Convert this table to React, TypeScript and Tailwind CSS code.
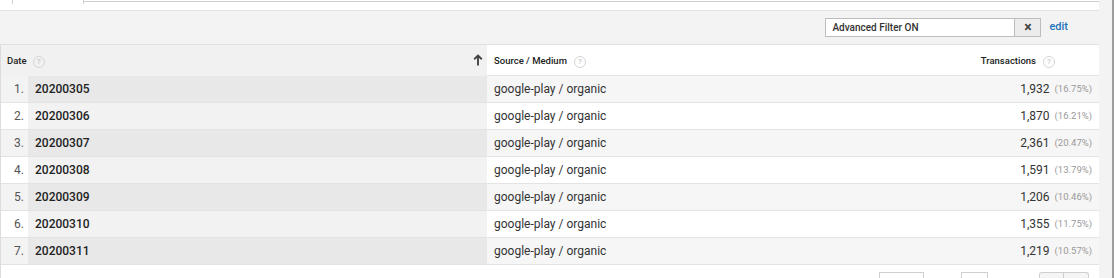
import React from "react";

const rows = [
  ["20200305", "1,932", "(16.75%)"],
  ["20200306", "1,870", "(16.21%)"],
  ["20200307", "2,361", "(20.47%)"],
  ["20200308", "1,591", "(13.79%)"],
  ["20200309", "1,206", "(10.46%)"],
  ["20200310", "1,355", "(11.75%)"],
  ["20200311", "1,219", "(10.57%)"],
];

function Help() {
  return (
    <span className="inline-flex h-[12px] w-[12px] items-center justify-center rounded-full border border-[#d6d6d6] text-[8px] leading-none text-[#c8c8c8]">
      ?
    </span>
  );
}

export default function App() {
  return (
    <div className="flex h-[278px] w-[1115px] overflow-hidden bg-white" style={{ fontFamily: "Roboto, 'Liberation Sans', sans-serif" }}>
      <div className="flex w-[1099px] shrink-0 flex-col">
        {/* tab strip */}
        <div className="flex h-[11px] shrink-0 border-b border-[#e3e3e3]">
          <div className="w-[12px]" />
          <div className="h-[4px] w-[72px] border-x border-[#cfcfcf] bg-white" />
          <div className="h-[2px] flex-1 border-b border-[#cfcfcf]" />
        </div>
        {/* toolbar */}
        <div className="flex h-[34px] shrink-0 items-center justify-end border-b border-[#e0e0e0] bg-[#f3f3f3] pr-[31px]">
          <div className="flex h-[19px] items-stretch">
            <div className="flex w-[190px] items-center border border-[#bdbdbd] bg-white pl-[6px] text-[10px] font-medium text-[#333]">
              Advanced Filter ON
            </div>
            <div className="flex w-[26px] items-center justify-center border border-l-0 border-[#bdbdbd] bg-[#ececec] text-[14px] font-bold text-[#444]">
              ×
            </div>
          </div>
          <span className="ml-[8px] text-[11px] font-medium text-[#1f73b7]">edit</span>
        </div>
        {/* table */}
        <div className="shrink-0 border-l border-[#dcdcdc]">
          <div className="flex h-[31px] items-center border-b border-[#e3e3e3] pt-[3px] text-[9.5px] font-medium text-[#222]">
            <div className="-mt-[3px] flex h-[31px] w-[486px] items-center bg-[#f1f1f1] pl-[6px] pr-[4px] pt-[3px]">
              <span>Date</span>
              <span className="ml-[6px]"><Help /></span>
              <svg className="-mt-[4px] ml-auto" width="10" height="12" viewBox="0 0 10 12">
                <path d="M5 1.5 V11.5 M1.2 5.2 L5 1.5 L8.8 5.2" fill="none" stroke="#444" strokeWidth="1.9" />
              </svg>
            </div>
            <div className="flex h-full flex-1 items-center pl-[7px]">
              <span>Source / Medium</span>
              <span className="ml-[7px]"><Help /></span>
            </div>
            <div className="flex h-full items-center pr-[44px]">
              <span>Transactions</span>
              <span className="ml-[7px]"><Help /></span>
            </div>
          </div>
          {rows.map((r, i) => {
            const odd = i % 2 === 0;
            return (
              <div key={r[0]} className={`flex h-[27px] items-center border-b border-[#e3e3e3] text-[12px] ${odd ? "bg-[#f6f6f6]" : "bg-white"}`}>
                <div className={`flex h-full w-[27px] items-center justify-end pr-[4px] text-[#555] ${odd ? "bg-[#f3f3f3]" : "bg-white"}`}>
                  {i + 1}.
                </div>
                <div className={`flex h-full w-[459px] items-center pl-[7px] font-medium text-[#222] ${odd ? "bg-[#e8e8e8]" : "bg-[#f2f2f2]"}`}>
                  {r[0]}
                </div>
                <div className="flex h-full flex-1 items-center pl-[7px] text-[#333]">google-play / organic</div>
                <div className="flex h-full items-center pr-[7px] text-[#333]">
                  {r[1]}
                  <span className="ml-[5px] text-[9.5px] text-[#999]">{r[2]}</span>
                </div>
              </div>
            );
          })}
          <div className="flex h-[20px] items-start pt-[7px]">
            <div className="ml-[878px] h-[12px] w-[45px] border-x border-t border-[#cfcfcf]" />
            <div className="ml-[37px] h-[12px] w-[27px] border-x border-t border-[#cfcfcf]" />
            <div className="ml-[51px] flex h-[12px] w-[50px] rounded-t-[3px] border-x border-t border-[#cfcfcf] bg-[#f5f5f5]">
              <div className="w-[24px] border-r border-[#cfcfcf]" />
            </div>
          </div>
        </div>
      </div>
      <div className="flex w-[16px] shrink-0">
        <div className="w-[13px] bg-[#f3f3f3]" />
        <div className="w-[2px] bg-[#9e9e9e]" />
        <div className="w-[1px] bg-white" />
      </div>
    </div>
  );
}
